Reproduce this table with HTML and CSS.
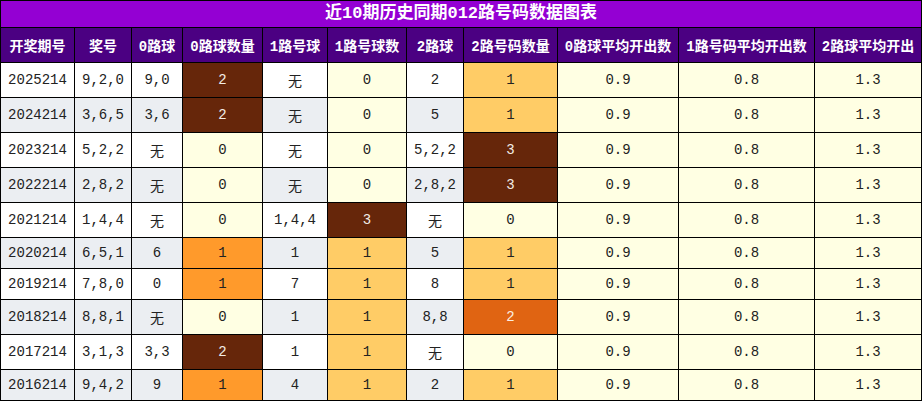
FILE: index.html
```html
<!DOCTYPE html>
<html lang="zh">
<head>
<meta charset="utf-8">
<title>近10期历史同期012路号码数据图表</title>
<link rel="stylesheet" href="styles.css">
</head>
<body>
<table class="chart">
  <colgroup>
    <col class="w74"><col class="w57"><col class="w51"><col class="w80"><col class="w65"><col class="w79"><col class="w57"><col class="w94"><col class="w121"><col class="w136"><col class="w108">
  </colgroup>
  <thead>
    <tr><th class="title" colspan="11">近10期历史同期012路号码数据图表</th></tr>
    <tr class="head">
      <th>开奖期号</th><th>奖号</th><th>0路球</th><th>0路球数量</th><th>1路号球</th><th>1路号球数</th><th>2路球</th><th>2路号码数量</th><th>0路球平均开出数</th><th>1路号码平均开出数</th><th>2路球平均开出</th>
    </tr>
  </thead>
  <tbody>
    <tr><td>2025214</td><td>9,2,0</td><td>9,0</td><td class="brown">2</td><td>无</td><td class="ly">0</td><td>2</td><td class="lo">1</td><td class="ly">0.9</td><td class="ly">0.8</td><td class="ly">1.3</td></tr>
    <tr class="g"><td>2024214</td><td>3,6,5</td><td>3,6</td><td class="brown">2</td><td>无</td><td class="ly">0</td><td>5</td><td class="lo">1</td><td class="ly">0.9</td><td class="ly">0.8</td><td class="ly">1.3</td></tr>
    <tr><td>2023214</td><td>5,2,2</td><td>无</td><td class="ly">0</td><td>无</td><td class="ly">0</td><td>5,2,2</td><td class="brown">3</td><td class="ly">0.9</td><td class="ly">0.8</td><td class="ly">1.3</td></tr>
    <tr class="g"><td>2022214</td><td>2,8,2</td><td>无</td><td class="ly">0</td><td>无</td><td class="ly">0</td><td>2,8,2</td><td class="brown">3</td><td class="ly">0.9</td><td class="ly">0.8</td><td class="ly">1.3</td></tr>
    <tr><td>2021214</td><td>1,4,4</td><td>无</td><td class="ly">0</td><td>1,4,4</td><td class="brown">3</td><td>无</td><td class="ly">0</td><td class="ly">0.9</td><td class="ly">0.8</td><td class="ly">1.3</td></tr>
    <tr class="g"><td>2020214</td><td>6,5,1</td><td>6</td><td class="or">1</td><td>1</td><td class="lo">1</td><td>5</td><td class="lo">1</td><td class="ly">0.9</td><td class="ly">0.8</td><td class="ly">1.3</td></tr>
    <tr><td>2019214</td><td>7,8,0</td><td>0</td><td class="or">1</td><td>7</td><td class="lo">1</td><td>8</td><td class="lo">1</td><td class="ly">0.9</td><td class="ly">0.8</td><td class="ly">1.3</td></tr>
    <tr class="g"><td>2018214</td><td>8,8,1</td><td>无</td><td class="ly">0</td><td>1</td><td class="lo">1</td><td>8,8</td><td class="dor">2</td><td class="ly">0.9</td><td class="ly">0.8</td><td class="ly">1.3</td></tr>
    <tr><td>2017214</td><td>3,1,3</td><td>3,3</td><td class="brown">2</td><td>1</td><td class="lo">1</td><td>无</td><td class="ly">0</td><td class="ly">0.9</td><td class="ly">0.8</td><td class="ly">1.3</td></tr>
    <tr class="g"><td>2016214</td><td>9,4,2</td><td>9</td><td class="or">1</td><td>4</td><td class="lo">1</td><td>2</td><td class="lo">1</td><td class="ly">0.9</td><td class="ly">0.8</td><td class="ly">1.3</td></tr>
  </tbody>
</table>
</body>
</html>
```

FILE: styles.css
```css
html, body {
  margin: 0;
  padding: 0;
  background: #ffffff;
}

.chart {
  width: 922px;
  table-layout: fixed;
  border-collapse: collapse;
  font-family: "Liberation Mono", "Noto Sans CJK SC", monospace;
  font-size: 14px;
  color: #222222;
}

.w74 { width: 74px; }
.w57 { width: 57px; }
.w51 { width: 51px; }
.w80 { width: 80px; }
.w65 { width: 65px; }
.w79 { width: 79px; }
.w94 { width: 94px; }
.w121 { width: 121px; }
.w136 { width: 136px; }
.w108 { width: 107px; }

.chart th,
.chart td {
  border: 1px solid #000000;
  padding: 7px 0;
  text-align: center;
  vertical-align: middle;
  white-space: nowrap;
  overflow: hidden;
}

.chart .title {
  background: #9400d3;
  color: #ffffff;
  font-size: 17px;
  font-weight: bold;
  padding: 0;
  height: 26px;
  line-height: 26px;
}

.head th {
  background: #4b0082;
  color: #ffffff;
  font-weight: bold;
}

.chart td {
  background: #ffffff;
}

.chart .g td {
  background: #ebeef2;
}

.chart td.ly,
.chart .g td.ly { background: #ffffe3; }

.chart td.lo,
.chart .g td.lo { background: #ffcc66; }

.chart td.or,
.chart .g td.or { background: #ff9a2b; }

.chart td.brown,
.chart .g td.brown { background: #66260a; color: #f2ece6; }

.chart td.dor,
.chart .g td.dor { background: #e06412; color: #fbeee2; }
```
